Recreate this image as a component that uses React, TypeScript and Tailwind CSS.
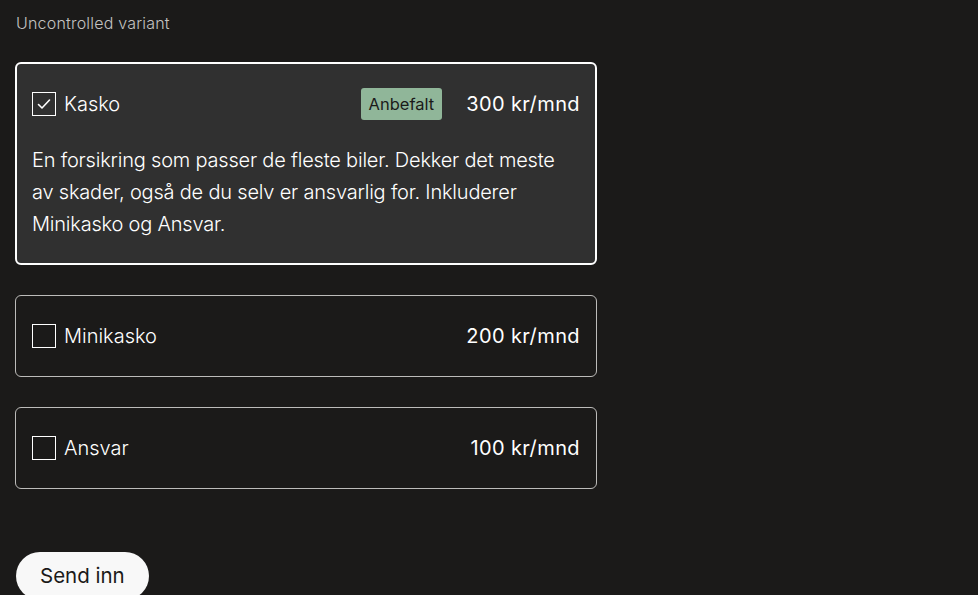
import { useState } from "react";

type Option = {
  id: string;
  title: string;
  price: string;
  recommended?: boolean;
  description?: string;
};

const options: Option[] = [
  {
    id: "kasko",
    title: "Kasko",
    price: "300 kr/mnd",
    recommended: true,
    description:
      "En forsikring som passer de fleste biler. Dekker det meste av skader, også de du selv er ansvarlig for. Inkluderer Minikasko og Ansvar.",
  },
  { id: "minikasko", title: "Minikasko", price: "200 kr/mnd" },
  { id: "ansvar", title: "Ansvar", price: "100 kr/mnd" },
];

function CheckBox({ checked }: { checked: boolean }) {
  return (
    <span className="flex h-6 w-6 shrink-0 items-center justify-center border-[1.5px] border-white">
      {checked ? (
        <svg width="16" height="16" viewBox="0 0 16 16" fill="none" aria-hidden="true">
          <path d="M2.5 8.5L6 12L13.5 4" stroke="#fff" strokeWidth="1.6" strokeLinecap="round" strokeLinejoin="round" />
        </svg>
      ) : null}
    </span>
  );
}

export default function App() {
  const [selected, setSelected] = useState<string[]>(["kasko"]);

  function toggle(id: string) {
    setSelected((prev) => (prev.includes(id) ? prev.filter((x) => x !== id) : [...prev, id]));
  }

  return (
    <div
      className="min-h-[595px] bg-[#1b1a19] px-4 pt-[11px] text-white"
      style={{ fontFamily: "Inter, 'Liberation Sans', sans-serif" }}
    >
      <p className="text-base font-light leading-6 tracking-[0.2px] text-[#c4c3c1]">Uncontrolled variant</p>

      <div className="mt-[27px] flex w-[582px] -ml-px flex-col gap-[30px]">
        {options.map((option) => {
          const isChecked = selected.includes(option.id);
          const expanded = isChecked && option.description;
          return (
            <div
              key={option.id}
              onClick={() => toggle(option.id)}
              className={`cursor-pointer rounded-md ${
                expanded
                  ? "border-2 border-white bg-[#303030] px-[15px] pt-6 pb-[23px]"
                  : "border border-[#bdbcba] px-4 py-6"
              }`}
            >
              <div className="flex h-8 items-center gap-2">
                <CheckBox checked={isChecked} />
                <span className="flex-1 text-xl font-light">{option.title}</span>
                {option.recommended ? (
                  <span className="mr-4 flex h-8 items-center rounded-[3px] bg-[#90b699] px-2 text-[16.5px] font-normal text-[#1b1a19]">
                    Anbefalt
                  </span>
                ) : null}
                <span className="text-xl font-normal tracking-[0.4px]">{option.price}</span>
              </div>
              {expanded ? (
                <p className="mt-6 text-xl font-light leading-8 tracking-[-0.2px]">{option.description}</p>
              ) : null}
            </div>
          );
        })}
      </div>

      <button
        type="button"
        className="mt-[63px] h-12 rounded-full bg-[#f8f8f8] px-6 text-[20.5px] font-normal text-[#1b1a19]"
      >
        Send inn
      </button>
    </div>
  );
}
